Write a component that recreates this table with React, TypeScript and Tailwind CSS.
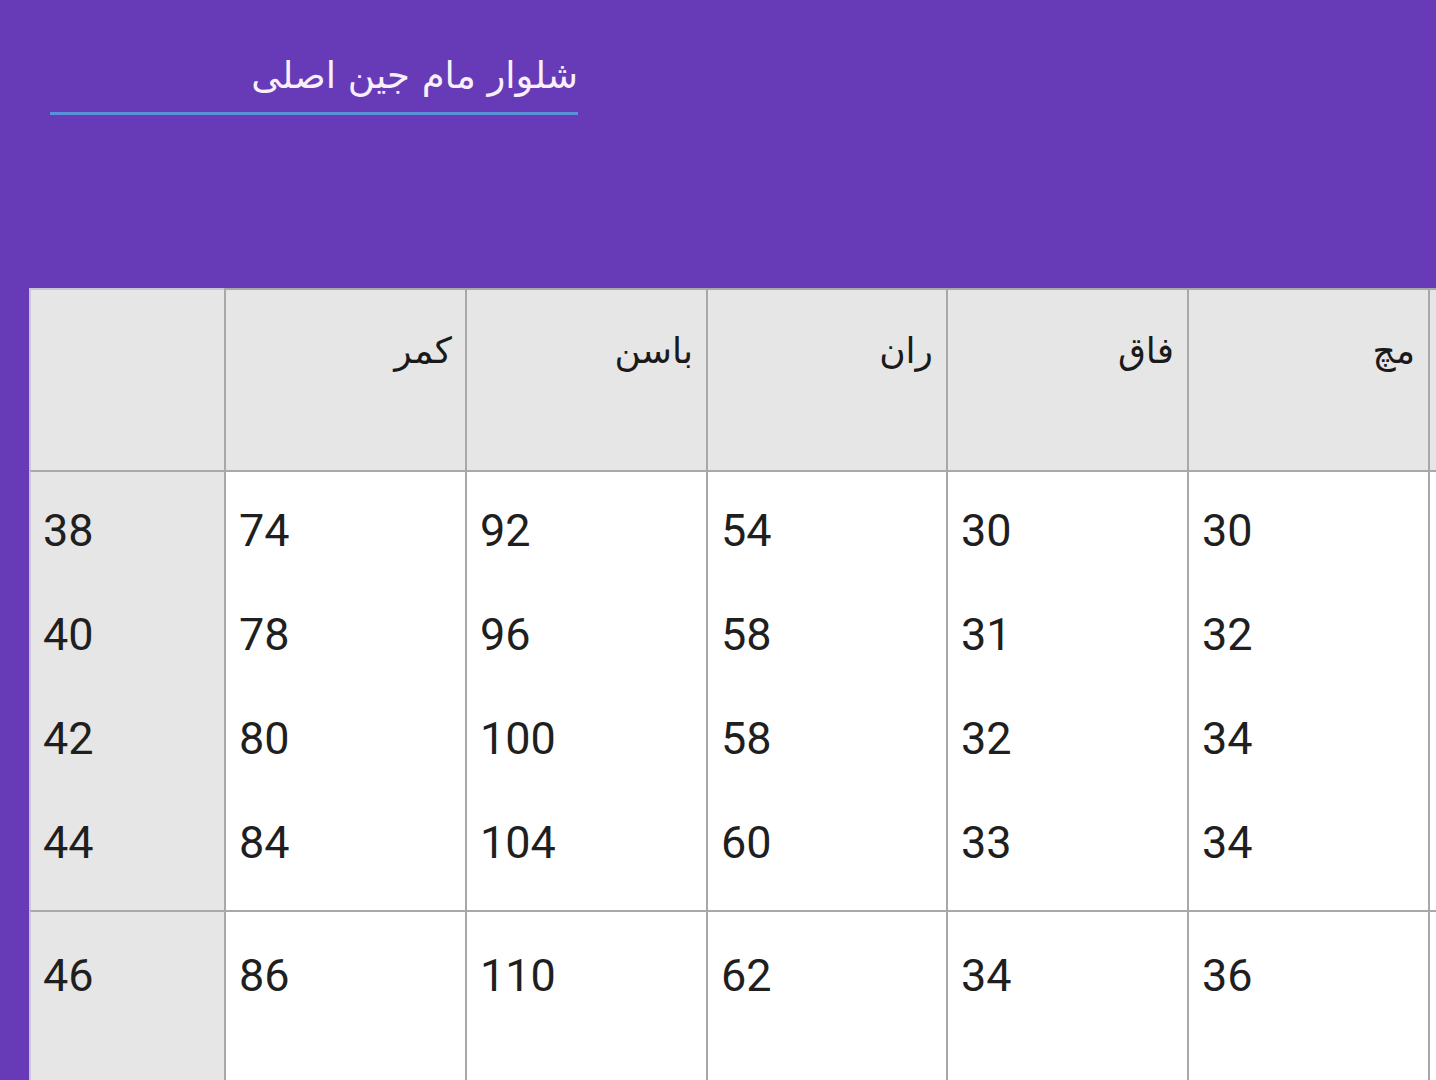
import React from "react";

const headers = ["کمر", "باسن", "ران", "فاق", "مچ", ""];
const sizes = ["38", "40", "42", "44"];
const body = [
  ["74", "78", "80", "84"],
  ["92", "96", "100", "104"],
  ["54", "58", "58", "60"],
  ["30", "31", "32", "33"],
  ["30", "32", "34", "34"],
  ["", "", "", ""],
];
const lastRow = ["86", "110", "62", "34", "36", ""];

const cell = "border-l-2 border-t-2 border-[#a8a8a8]";

export default function App() {
  return (
    <div className="w-[1436px] h-[1080px] overflow-hidden bg-[#673ab7]">
      {/* Title field */}
      <div className="pl-[50px] pt-[52px]">
        <div
          dir="rtl"
          className="w-[528px] pb-[12px] border-b-[3px] border-[#5b8fd8] text-right text-[37px] leading-[48px] text-[#f7f0fa]"
          style={{ fontFamily: '"DejaVu Sans", sans-serif' }}
        >
          شلوار مام جین اصلی
        </div>
      </div>

      {/* Size table */}
      <div
        className="ml-[29px] mt-[173px] grid grid-cols-[195px_241px_241px_240px_241px_241px_241px] grid-rows-[182px_440px_300px]"
        style={{ fontFamily: "Roboto, sans-serif" }}
      >
        {/* header */}
        <div className={`${cell} border-[#c9c5d6] bg-[#e6e6e6]`} />
        {headers.map((h, i) => (
          <div
            key={i}
            dir="rtl"
            className={`${cell} bg-[#e6e6e6] pt-[46px] pr-[13px] text-right text-[36px] leading-[30px] text-[#1a1a1a]`}
            style={{ fontFamily: '"DejaVu Sans", sans-serif' }}
          >
            {h}
          </div>
        ))}

        {/* main rows */}
        <div className={`${cell} border-l-[#c9c5d6] bg-[#e6e6e6] pt-[7px] pl-[12px] text-[45px] leading-[104px] text-[#1f1f1f]`}>
          {sizes.map((s) => (
            <div key={s}>{s}</div>
          ))}
        </div>
        {body.map((col, i) => (
          <div key={i} className={`${cell} bg-white pt-[7px] pl-[13px] text-[45px] leading-[104px] text-[#1f1f1f]`}>
            {col.map((v, j) => (
              <div key={j} className="h-[104px]">{v}</div>
            ))}
          </div>
        ))}

        {/* last row */}
        <div className={`${cell} border-l-[#c9c5d6] bg-[#e6e6e6] pt-[12px] pl-[12px] text-[45px] leading-[104px] text-[#1f1f1f]`}>
          46
        </div>
        {lastRow.map((v, i) => (
          <div key={i} className={`${cell} bg-white pt-[12px] pl-[13px] text-[45px] leading-[104px] text-[#1f1f1f]`}>
            {v}
          </div>
        ))}
      </div>
    </div>
  );
}
